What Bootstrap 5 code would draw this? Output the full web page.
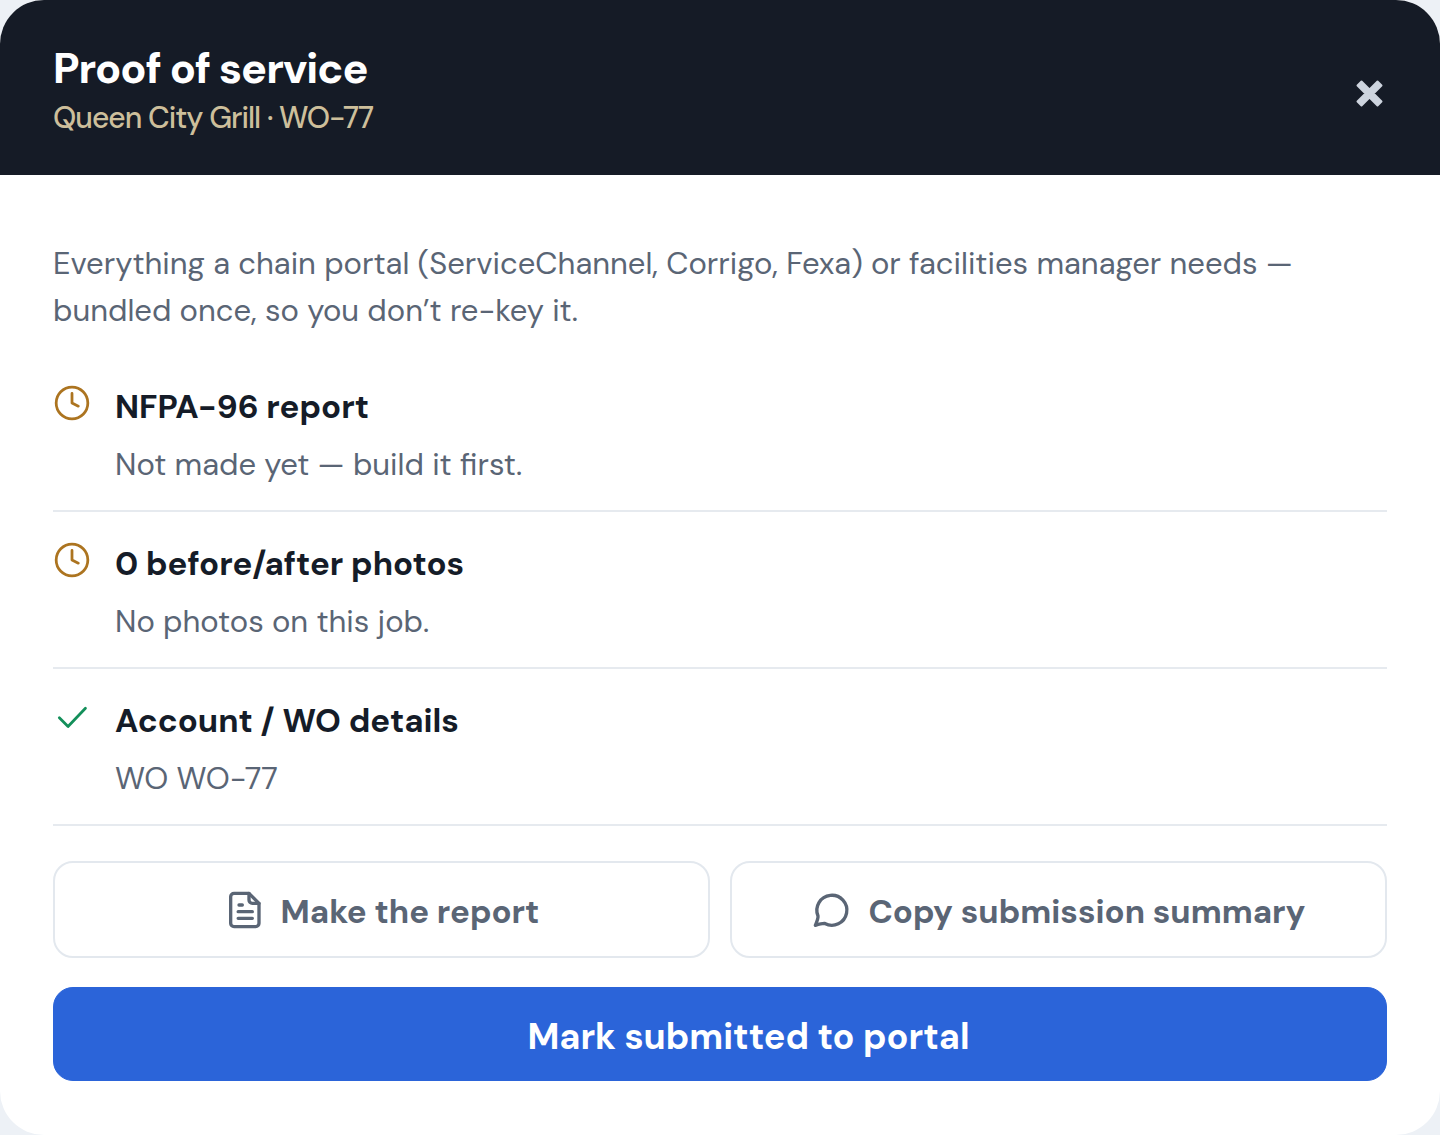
<!DOCTYPE html>
<html lang="en">
<head>
<meta charset="utf-8">
<meta name="viewport" content="width=device-width, initial-scale=1">
<title>Proof of service</title>
<link href="https://cdn.jsdelivr.net/npm/bootstrap@5.3.0/dist/css/bootstrap.min.css" rel="stylesheet">
<style>
  body { background: #edf1f6; font-family: "DM Sans", Inter, sans-serif; color: #151c28; }
  .proof-panel { background: #fff; border-radius: 44px; overflow: hidden; }
  .proof-head { background: #151b26; padding: 43px 53px 32px; letter-spacing: -1px; }
  .proof-title { font-size: 43px; line-height: 50px; font-weight: 800; color: #fff; }
  .proof-sub { font-size: 30px; line-height: 50px; font-weight: 500; color: #cdbf9b; }
  .proof-close { color: #cdd4de; line-height: 0; padding: 0 4px; }
  .proof-body { padding: 65px 53px 54px; }
  .proof-intro { font-size: 31px; line-height: 47px; color: #5a6575; margin-bottom: 21px; }
  .check-row { gap: 24px; padding: 28px 0 22px; border-bottom: 2px solid #e6eaef; }
  .check-name { font-size: 33px; line-height: 47px; font-weight: 700; }
  .check-note { font-size: 31px; line-height: 47px; color: #5a6575; margin-top: 11px; }
  .ico { width: 40px; height: 40px; flex: none; fill: none; stroke: currentColor; stroke-width: 2; stroke-linecap: round; stroke-linejoin: round; }
  .check-row .ico { width: 38px; height: 38px; margin-top: 1px; stroke-width: 1.75; }
  .tone-wait { color: #ac7420; }
  .tone-done { color: #138f5a; }
  .proof-actions { gap: 20px; margin: 35px 0 29px; }
  .proof-btn { gap: 17px; border-radius: 20px; font-weight: 700; line-height: 47px; padding: 0 12px; }
  .proof-btn span { padding-top: 4px; }
  .btn-ghost { --bs-btn-color: #5a6575; --bs-btn-border-color: #e3e8ee; --bs-btn-hover-color: #151c28; --bs-btn-hover-border-color: #cdd4de; --bs-btn-border-width: 2px; background: #fff; flex: 1 1 0; height: 97px; font-size: 33px; }
  .btn-submit { --bs-btn-color: #fff; --bs-btn-bg: #2b64d9; --bs-btn-border-color: #2b64d9; --bs-btn-hover-color: #fff; --bs-btn-hover-bg: #2456c0; height: 94px; font-size: 36px; }
</style>
</head>
<body>
<main class="proof-panel">
  <header class="proof-head d-flex align-items-center justify-content-between">
    <div>
      <h1 class="proof-title m-0">Proof of service</h1>
      <p class="proof-sub mb-0">Queen City Grill · WO-77</p>
    </div>
    <button type="button" class="proof-close btn border-0" aria-label="Close">
      <svg width="27" height="27" viewBox="0 0 27 27" aria-hidden="true"><path fill="currentColor" stroke="currentColor" stroke-width="2" stroke-linejoin="round" d="M5.500 1.500l8 8 8-8 4 4-8 8 8 8-4 4-8-8-8 8-4-4 8-8-8-8z"/></svg>
    </button>
  </header>
  <div class="proof-body">
    <p class="proof-intro">Everything a chain portal (ServiceChannel, Corrigo, Fexa) or facilities manager needs — bundled once, so you don’t re-key it.</p>
    <ul class="list-unstyled m-0">
      <li class="check-row d-flex align-items-start">
        <svg class="ico tone-wait" viewBox="0 0 24 24" aria-hidden="true"><circle cx="12" cy="12" r="10"/><path d="M12 6v6l4 2"/></svg>
        <div><h2 class="check-name m-0">NFPA-96 report</h2><p class="check-note mb-0">Not made yet — build it first.</p></div>
      </li>
      <li class="check-row d-flex align-items-start">
        <svg class="ico tone-wait" viewBox="0 0 24 24" aria-hidden="true"><circle cx="12" cy="12" r="10"/><path d="M12 6v6l4 2"/></svg>
        <div><h2 class="check-name m-0">0 before/after photos</h2><p class="check-note mb-0">No photos on this job.</p></div>
      </li>
      <li class="check-row d-flex align-items-start">
        <svg class="ico tone-done" viewBox="0 0 24 24" aria-hidden="true"><path d="M20.500 6.500L9.500 18l-5.500-5.500"/></svg>
        <div><h2 class="check-name m-0">Account / WO details</h2><p class="check-note mb-0">WO WO-77</p></div>
      </li>
    </ul>
    <div class="proof-actions d-flex">
      <button type="button" class="btn btn-ghost proof-btn d-flex align-items-center justify-content-center">
        <svg class="ico" viewBox="0 0 24 24" aria-hidden="true"><path d="M15 2H6a2 2 0 0 0-2 2v16a2 2 0 0 0 2 2h13a2 2 0 0 0 2-2V8z"/><path d="M15 2v4a2 2 0 0 0 2 2h4M11 9H9M17 13H8.500M17 17H8.500"/></svg>
        <span>Make the report</span>
      </button>
      <button type="button" class="btn btn-ghost proof-btn d-flex align-items-center justify-content-center">
        <svg class="ico" viewBox="0 0 24 24" aria-hidden="true"><path d="M4.200 15.600A9 9 0 1 1 8.300 20.100Q7 19.900 2.600 21.200Q4.400 17 4.200 15.600z"/></svg>
        <span>Copy submission summary</span>
      </button>
    </div>
    <button type="button" class="btn btn-submit proof-btn w-100 d-flex align-items-center justify-content-center">
      <svg class="ico" viewBox="0 0 24 24" aria-hidden="true"></svg>
      <span>Mark submitted to portal</span>
    </button>
  </div>
</main>
<script src="https://cdn.jsdelivr.net/npm/bootstrap@5.3.0/dist/js/bootstrap.bundle.min.js"></script>
</body>
</html>
